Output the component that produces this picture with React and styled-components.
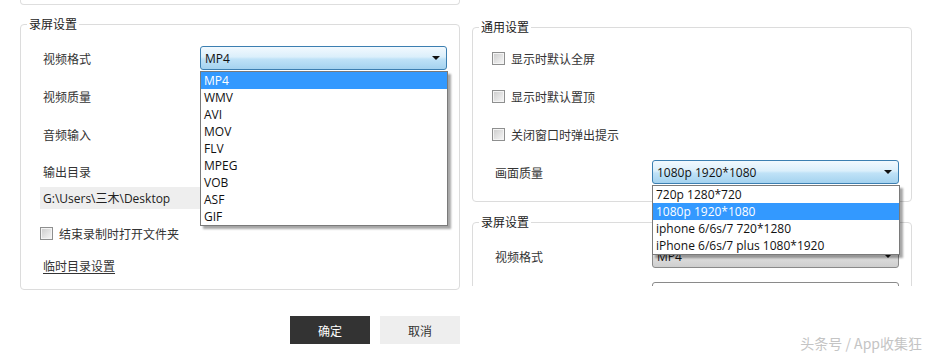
import React from "react";
import styled, { createGlobalStyle, css } from "styled-components";

const formats = ["MP4", "WMV", "AVI", "MOV", "FLV", "MPEG", "VOB", "ASF", "GIF"];
const qualities = [
  "720p 1280*720",
  "1080p 1920*1080",
  "iphone 6/6s/7 720*1280",
  "iPhone 6/6s/7 plus 1080*1920"
];

const Combo = ({ value, variant, options, active }) => (
  <ComboWrap>
    <ComboFace $variant={variant}>
      <span>{value}</span>
      {variant !== "empty" && <Caret />}
    </ComboFace>
    {options && (
      <DropList>
        {options.map((o) => (
          <DropItem key={o} $active={o === active}>
            {o}
          </DropItem>
        ))}
      </DropList>
    )}
  </ComboWrap>
);

const Check = ({ children }) => (
  <CheckRow>
    <CheckBox />
    <span>{children}</span>
  </CheckRow>
);

const App = () => {
  return (
    <>
      <GlobalStyle />
      <Screen>
        <Columns>
          <Column>
            <Stub />
            <Group $top={11}>
              <Legend>录屏设置</Legend>
              <GroupBody $pt={7} $pb={14}>
                <Row>
                  <Label>视频格式</Label>
                  <Combo value="MP4" variant="hot" options={formats} active="MP4" />
                </Row>
                <Row>
                  <Label>视频质量</Label>
                  <Combo value="" variant="normal" />
                </Row>
                <Row>
                  <Label>音频输入</Label>
                  <Combo value="" variant="normal" />
                </Row>
                <LabelRow>
                  <Label>输出目录</Label>
                </LabelRow>
                <PathField>G:\Users\三木\Desktop</PathField>
                <Spacer $h={14} />
                <Check>结束录制时打开文件夹</Check>
                <Spacer $h={12} />
                <LinkRow>
                  <LinkText>临时目录设置</LinkText>
                </LinkRow>
              </GroupBody>
            </Group>
            <Actions>
              <Button $primary>确定</Button>
              <Button>取消</Button>
            </Actions>
          </Column>

          <Column>
            <Group $top={19}>
              <Legend>通用设置</Legend>
              <GroupBody $pt={4} $pb={10}>
                <Row>
                  <Check>显示时默认全屏</Check>
                </Row>
                <Row>
                  <Check>显示时默认置顶</Check>
                </Row>
                <Row>
                  <Check>关闭窗口时弹出提示</Check>
                </Row>
                <Row>
                  <Label>画面质量</Label>
                  <Combo
                    value="1080p 1920*1080"
                    variant="hot"
                    options={qualities}
                    active="1080p 1920*1080"
                  />
                </Row>
              </GroupBody>
            </Group>
            <Viewport>
              <Group $top={0}>
                <Legend>录屏设置</Legend>
                <GroupBody $pt={7} $pb={14}>
                  <Row>
                    <Label>视频格式</Label>
                    <Combo value="MP4" variant="normal" />
                  </Row>
                  <Row>
                    <Label />
                    <Combo value="" variant="empty" />
                  </Row>
                </GroupBody>
              </Group>
            </Viewport>
          </Column>
        </Columns>
        <Watermark>头条号 / App收集狂</Watermark>
      </Screen>
    </>
  );
};

// Styles ***************************
const GlobalStyle = createGlobalStyle`
  html, body {
    margin: 0;
    padding: 0;
    background: #fff;
  }
  * {
    box-sizing: border-box;
  }
`;

const Screen = styled.div`
  position: relative;
  width: 931px;
  height: 358px;
  overflow: hidden;
  background: #fff;
  color: #333;
  font-family: "Noto Sans CJK SC", "Open Sans", sans-serif;
  font-size: 12px;
`;

const Columns = styled.div`
  display: flex;
  gap: 12px;
  padding-left: 20px;
`;

const Column = styled.div`
  width: 440px;
  display: flex;
  flex-direction: column;
`;

const Stub = styled.div`
  height: 5px;
  border: 1px solid #dedede;
  border-top: none;
  border-radius: 0 0 4px 4px;
`;

const Group = styled.fieldset`
  margin: ${({ $top }) => $top}px 0 0 0;
  padding: 0;
  min-width: 0;
  border: 1px solid #dcdcdc;
  border-radius: 4px;
`;

const Legend = styled.legend`
  margin-left: 6px;
  padding: 0 2px;
  height: 16px;
  line-height: 16px;
  font-size: 12px;
  color: #222;
`;

const GroupBody = styled.div`
  display: flex;
  flex-direction: column;
  padding: ${({ $pt }) => $pt}px 12px ${({ $pb }) => $pb}px 19px;
`;

const Row = styled.div`
  display: flex;
  align-items: center;
  height: 38px;
`;

const LabelRow = styled.div`
  display: flex;
  align-items: center;
  height: 28px;
  margin-top: 4px;
`;

const Label = styled.div`
  width: 160px;
  flex-shrink: 0;
  padding-left: 3px;
  color: #333;
`;

const ComboWrap = styled.div`
  position: relative;
  flex: 1;
  height: 24px;
`;

const faces = {
  hot: css`
    border: 1px solid #3c7fb1;
    background: linear-gradient(
      to bottom,
      #f2f9fe 0%,
      #dbeffb 45%,
      #bfe2f7 55%,
      #a4d2ef 100%
    );
  `,
  normal: css`
    border: 1px solid #8a8a8a;
    background: linear-gradient(
      to bottom,
      #f2f2f2 0%,
      #ebebeb 45%,
      #dddddd 55%,
      #cfcfcf 100%
    );
  `,
  empty: css`
    border: 1px solid #8a8a8a;
    background: #fff;
  `
};

const ComboFace = styled.div`
  height: 24px;
  display: flex;
  align-items: center;
  justify-content: space-between;
  padding: 0 5px 0 4px;
  border-radius: 3px;
  font-family: "Open Sans", "Noto Sans CJK SC", sans-serif;
  font-size: 12px;
  color: #111;
  ${({ $variant }) => faces[$variant]}
`;

const Caret = styled.span`
  width: 0;
  height: 0;
  margin-right: 1px;
  border-left: 4px solid transparent;
  border-right: 4px solid transparent;
  border-top: 4px solid #111;
`;

const DropList = styled.div`
  position: absolute;
  z-index: 10;
  top: calc(100% + 1px);
  left: 0;
  right: -1px;
  background: #fff;
  border: 1px solid #7a7a7a;
  box-shadow: 3px 3px 2px rgba(0, 0, 0, 0.35);
`;

const DropItem = styled.div`
  height: 17px;
  line-height: 17px;
  padding-left: 3px;
  font-family: "Open Sans", sans-serif;
  font-size: 12px;
  white-space: nowrap;
  color: ${({ $active }) => ($active ? "#fff" : "#111")};
  background: ${({ $active }) => ($active ? "#3399ff" : "transparent")};
`;

const PathField = styled.div`
  height: 22px;
  margin-top: 2px;
  display: flex;
  align-items: center;
  padding-left: 3px;
  background: #eeeeee;
  font-family: "Open Sans", "Noto Sans CJK SC", sans-serif;
  color: #222;
`;

const Spacer = styled.div`
  height: ${({ $h }) => $h}px;
`;

const CheckRow = styled.div`
  display: flex;
  align-items: center;
  gap: 6px;
  height: 20px;
  color: #333;
`;

const CheckBox = styled.span`
  width: 13px;
  height: 13px;
  border: 1px solid #8e8f8f;
  background: linear-gradient(135deg, #cbcbcb 0%, #e6e6e6 60%, #f7f7f7 100%);
  box-shadow: inset 0 0 0 1px #f4f4f4;
`;

const LinkRow = styled.div`
  display: flex;
  align-items: center;
  height: 20px;
  padding-left: 3px;
`;

const LinkText = styled.span`
  color: #333;
  text-decoration: underline;
  text-underline-offset: 2px;
`;

const Actions = styled.div`
  display: flex;
  justify-content: flex-end;
  gap: 10px;
  margin-top: 26px;
`;

const Button = styled.div`
  width: 80px;
  height: 28px;
  display: flex;
  align-items: center;
  justify-content: center;
  background: ${({ $primary }) => ($primary ? "#333" : "#eeeeee")};
  color: ${({ $primary }) => ($primary ? "#fff" : "#333")};
  font-size: 12px;
`;

const Viewport = styled.div`
  margin-top: 12px;
  height: 72px;
  overflow: hidden;
`;

const Watermark = styled.div`
  position: absolute;
  right: 9px;
  bottom: 5px;
  font-size: 14px;
  color: #c4c4c4;
  white-space: nowrap;
`;

export default App;
